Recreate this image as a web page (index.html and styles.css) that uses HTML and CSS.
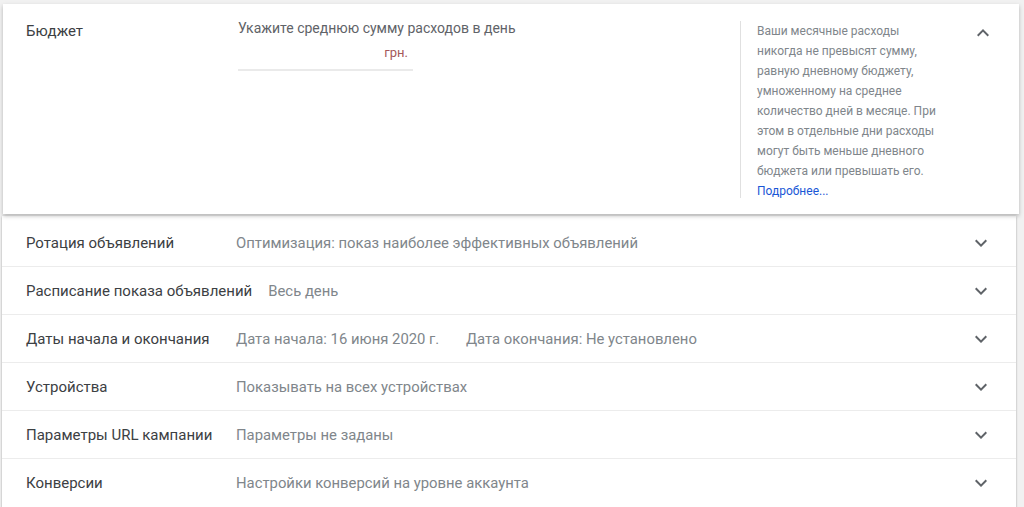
FILE: index.html
```html
<!DOCTYPE html>
<html lang="ru">
<head>
    <meta charset="UTF-8">
    <title>Настройки кампании</title>
    <link rel="stylesheet" href="styles.css">
</head>
<body>

    <!-- Expanded section -->
    <div class="panel">
        <div class="panel-title">Бюджет</div>
        <div class="panel-body">
            <div class="budget-field">
                <div class="budget-label">Укажите среднюю сумму расходов в день</div>
                <div class="budget-input">
                    <span class="currency">грн.</span>
                </div>
            </div>
        </div>
        <div class="panel-help">
            Ваши месячные расходы никогда не превысят сумму, равную дневному бюджету, умноженному на среднее количество дней в месяце. При этом в отдельные дни расходы могут быть меньше дневного бюджета или превышать его.
            <a href="#" class="help-link">Подробнее...</a>
        </div>
        <div class="toggle">
            <svg width="12" height="8" viewBox="0 0 12 8"><path d="M1.4 7.4L6 2.8l4.6 4.6L12 6 6 0 0 6z" fill="#5f6368"/></svg>
        </div>
    </div>

    <!-- Collapsed sections -->
    <div class="list">
        <div class="row">
            <div class="row-title">Ротация объявлений</div>
            <div class="row-value">Оптимизация: показ наиболее эффективных объявлений</div>
            <div class="toggle"><svg width="12" height="8" viewBox="0 0 12 8"><path d="M10.6 0.6L6 5.2 1.4 0.6 0 2l6 6 6-6z" fill="#5f6368"/></svg></div>
        </div>
        <div class="row">
            <div class="row-title">Расписание показа объявлений</div>
            <div class="row-value">Весь день</div>
            <div class="toggle"><svg width="12" height="8" viewBox="0 0 12 8"><path d="M10.6 0.6L6 5.2 1.4 0.6 0 2l6 6 6-6z" fill="#5f6368"/></svg></div>
        </div>
        <div class="row">
            <div class="row-title">Даты начала и окончания</div>
            <div class="row-value">
                <span class="date-part">Дата начала: 16 июня 2020 г.</span>
                <span>Дата окончания: Не установлено</span>
            </div>
            <div class="toggle"><svg width="12" height="8" viewBox="0 0 12 8"><path d="M10.6 0.6L6 5.2 1.4 0.6 0 2l6 6 6-6z" fill="#5f6368"/></svg></div>
        </div>
        <div class="row">
            <div class="row-title">Устройства</div>
            <div class="row-value">Показывать на всех устройствах</div>
            <div class="toggle"><svg width="12" height="8" viewBox="0 0 12 8"><path d="M10.6 0.6L6 5.2 1.4 0.6 0 2l6 6 6-6z" fill="#5f6368"/></svg></div>
        </div>
        <div class="row">
            <div class="row-title">Параметры URL кампании</div>
            <div class="row-value">Параметры не заданы</div>
            <div class="toggle"><svg width="12" height="8" viewBox="0 0 12 8"><path d="M10.6 0.6L6 5.2 1.4 0.6 0 2l6 6 6-6z" fill="#5f6368"/></svg></div>
        </div>
        <div class="row">
            <div class="row-title">Конверсии</div>
            <div class="row-value">Настройки конверсий на уровне аккаунта</div>
            <div class="toggle"><svg width="12" height="8" viewBox="0 0 12 8"><path d="M10.6 0.6L6 5.2 1.4 0.6 0 2l6 6 6-6z" fill="#5f6368"/></svg></div>
        </div>
    </div>

</body>
</html>
```

FILE: styles.css
```css
body {
    font-family: Roboto, 'Liberation Sans', sans-serif;
    background-color: #f1f1f1;
    margin: 0;
    padding: 4px 0 0 0;
    color: #3c4043;
    height: 503px;
    overflow: hidden;
}

.panel {
    display: flex;
    background-color: #fff;
    margin: 0 5px 0 3px;
    height: 210px;
    box-sizing: border-box;
    padding: 17px 0 0 23px;
    box-shadow: 0 2px 4px rgba(0, 0, 0, 0.25);
    position: relative;
    z-index: 1;
}

.panel-title {
    width: 212px;
    font-size: 15px;
    padding-top: 1px;
}

.panel-body {
    flex: 1;
}

.budget-field {
    width: 175px;
}

.budget-label {
    font-size: 14px;
    color: #5f6368;
    white-space: nowrap;
    margin-top: -1px;
}

.budget-input {
    height: 33px;
    border-bottom: 2px solid #eaeaea;
    text-align: right;
    padding: 4px 5px 0 0;
    box-sizing: border-box;
    margin-top: 2px;
}

.currency {
    font-size: 13px;
    color: #a4585a;
}

.panel-help {
    width: 196px;
    height: 177px;
    border-left: 1px solid #e0e0e0;
    padding-left: 16px;
    font-size: 12px;
    line-height: 20px;
    color: #80868b;
    box-sizing: border-box;
}

.help-link {
    display: block;
    color: #1a57d6;
    text-decoration: none;
}

.toggle {
    width: 80px;
    display: flex;
    justify-content: center;
    box-sizing: border-box;
}

.panel .toggle {
    width: 83px;
    padding: 8px 0 0 11px;
    height: 28px;
}

.list {
    background-color: #fff;
    margin: 2px 8px 0 2px;
    box-shadow: 0 1px 2px rgba(0, 0, 0, 0.35);
}

.row {
    display: flex;
    align-items: center;
    height: 48px;
    padding-left: 24px;
    border-bottom: 1px solid #ececec;
    box-sizing: border-box;
}

.row:first-child {
    height: 51px;
    padding-top: 4px;
}

.row:last-child {
    border-bottom: none;
}

.row-title {
    min-width: 194px;
    margin-right: 16px;
    font-size: 15px;
    color: #3c4043;
}

.row-value {
    flex: 1;
    font-size: 14.85px;
    color: #80868b;
}

.date-part {
    margin-right: 23px;
}

.row .toggle {
    width: 70px;
}
```
